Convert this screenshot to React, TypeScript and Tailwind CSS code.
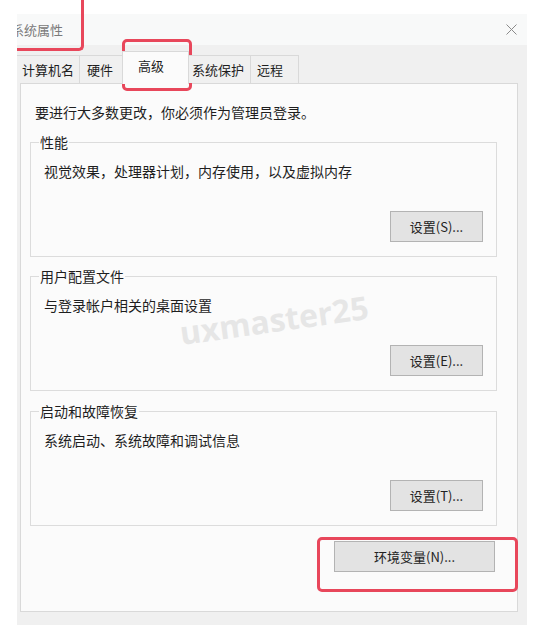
import React from 'react';

interface GroupProps {
  title: string;
  desc: string;
  button: string;
  className?: string;
}

function Group({ title, desc, button, className = '' }: GroupProps) {
  return (
    <fieldset className={`ml-[9px] w-[467px] border border-[#dcdcdc] ${className}`}>
      <legend className="ml-[8px] px-[1px] text-[14px] leading-[20px]">{title}</legend>
      <div className="pl-[13px] mt-[9px] text-[14px] leading-[20px]">{desc}</div>
      <div className="flex justify-end pr-[13px] mt-[30px] pb-[14px]">
        <button className="w-[93px] h-[31px] bg-[#e3e3e3] border border-[#b3b3b3] text-[13px] leading-none text-[#222]">
          {button}
        </button>
      </div>
    </fieldset>
  );
}

const tabBase = 'h-[28px] -ml-px border border-b-0 border-[#d9d9d9] bg-[#f0f0f0] text-[13px] flex items-center';

export default function App() {
  return (
    <div className="relative w-[545px] h-[639px] overflow-hidden bg-white font-['Noto_Sans_CJK_SC',sans-serif] text-[#1e1e1e]">
      <div className="ml-[17px] mt-[14px] w-[510px] h-[611px] bg-[#f0f0f0] flex flex-col overflow-hidden">
        {/* title bar */}
        <div className="h-[31px] shrink-0 bg-[#f8f9f9] flex items-center justify-between">
          <span className="-ml-[6px] text-[13px] leading-none text-[#7a7a7a]">系统属性</span>
          <svg width="11" height="11" viewBox="0 0 11 11" className="mr-[10px]">
            <path d="M0.5 0.5 L10.5 10.5 M10.5 0.5 L0.5 10.5" stroke="#8a8a8a" strokeWidth="1" fill="none" />
          </svg>
        </div>

        {/* tabs */}
        <div className="h-[38px] shrink-0 flex items-end relative z-10">
          <div className={`${tabBase} w-[64px] pl-[5px]`}>计算机名</div>
          <div className={`${tabBase} w-[44px] pl-[7px]`}>硬件</div>
          <div className="h-[33px] -ml-px -mb-px w-[67px] pl-[15px] pb-[4px] border border-b-0 border-[#d9d9d9] bg-[#fbfbfb] text-[13px] flex items-center">
            高级
          </div>
          <div className={`${tabBase} w-[63px] pl-[3px]`}>系统保护</div>
          <div className={`${tabBase} w-[49px] pl-[6px]`}>远程</div>
        </div>

        {/* panel */}
        <div className="ml-[3px] w-[498px] h-[529px] border border-[#d9d9d9] bg-[#fbfbfb] flex flex-col">
          <div className="pl-[14px] mt-[18px] text-[14px] leading-[20px]">要进行大多数更改，你必须作为管理员登录。</div>
          <Group className="mt-[10px]" title="性能" desc="视觉效果，处理器计划，内存使用，以及虚拟内存" button="设置(S)..." />
          <Group className="mt-[9px]" title="用户配置文件" desc="与登录帐户相关的桌面设置" button="设置(E)..." />
          <Group className="mt-[10px]" title="启动和故障恢复" desc="系统启动、系统故障和调试信息" button="设置(T)..." />
          <div className="flex justify-end pr-[22px] mt-[15px]">
            <button className="w-[161px] h-[31px] bg-[#e3e3e3] border border-[#b3b3b3] text-[13px] leading-none text-[#222]">
              环境变量(N)...
            </button>
          </div>
        </div>
      </div>

      {/* watermark */}
      <div className="absolute left-[179px] top-[304px] -rotate-[8deg] font-['Open_Sans',sans-serif] font-bold text-[32px] leading-none text-[#e6e6e6] select-none">
        uxmaster25
      </div>

      {/* annotation boxes */}
      <div className="absolute left-[17px] top-0 w-[67px] h-[51px] border-r-[3px] border-b-[3px] border-[#e8475b] rounded-br-[5px]" />
      <div className="absolute left-[122px] top-[39px] w-[70px] h-[52px] border-[3px] border-[#e8475b] rounded-[5px]" />
      <div className="absolute left-[317px] top-[537px] w-[201px] h-[55px] border-[3px] border-[#e8475b] rounded-[5px]" />
    </div>
  );
}
